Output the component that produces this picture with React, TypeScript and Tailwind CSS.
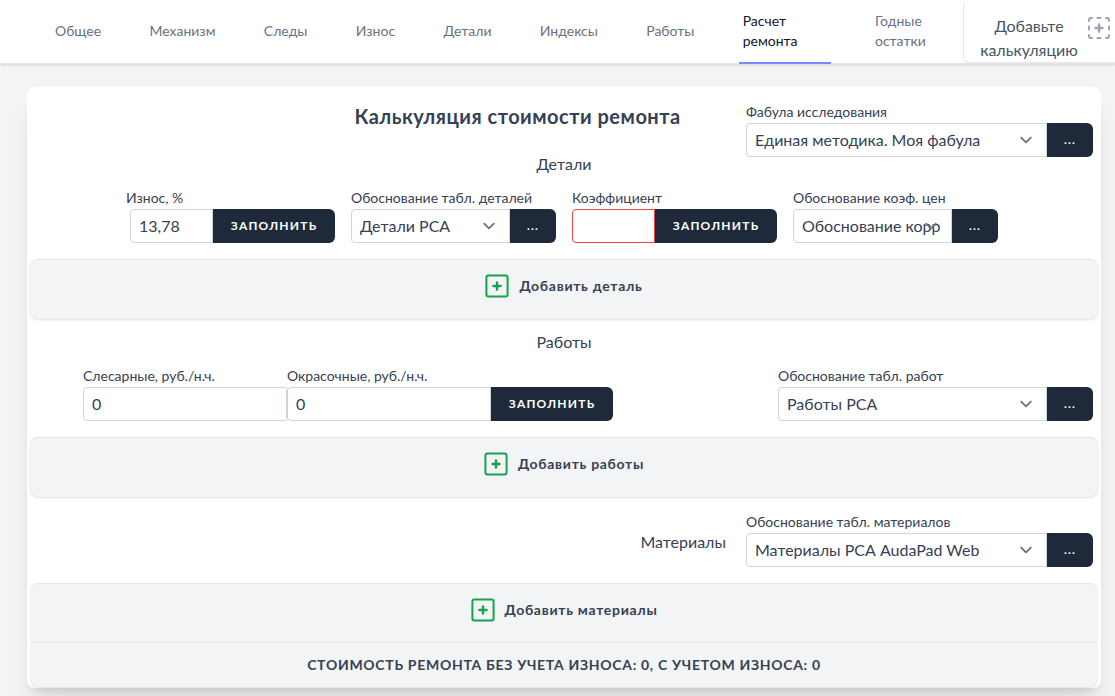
import React from "react"

const tabs = [
  "Общее",
  "Механизм",
  "Следы",
  "Износ",
  "Детали",
  "Индексы",
  "Работы",
  "Расчет ремонта",
  "Годные остатки",
]

const activeTab = "Расчет ремонта"

const DashedPlusIcon: React.FC = () => (
  <svg
    className="size-6 shrink-0 text-[#9ca3af]"
    viewBox="0 0 24 24"
    fill="none"
    stroke="currentColor"
    strokeWidth="2"
    strokeLinecap="round"
    aria-hidden="true"
  >
    <path d="M5 2H4a2 2 0 0 0-2 2v1M19 2h1a2 2 0 0 1 2 2v1M22 19v1a2 2 0 0 1-2 2h-1M5 22H4a2 2 0 0 1-2-2v-1" />
    <path d="M10.5 2h3M10.5 22h3M2 10.5v3M22 10.5v3" />
    <path d="M12 8.5v7M8.5 12h7" strokeWidth="2.4" />
  </svg>
)

const PlusSquareIcon: React.FC = () => (
  <svg
    className="size-6 shrink-0 text-[#16a34a]"
    viewBox="0 0 24 24"
    fill="none"
    stroke="currentColor"
    strokeWidth="2"
    strokeLinecap="round"
    aria-hidden="true"
  >
    <rect x="1.4" y="1.4" width="21.2" height="21.2" rx="2" />
    <path d="M12 8.4v7.2M8.4 12h7.2" strokeWidth="2.4" />
  </svg>
)

interface FieldProps {
  id: string
  label: string
  className?: string
  labelClassName?: string
  children: React.ReactNode
}

const Field: React.FC<FieldProps> = ({ id, label, className = "", labelClassName = "", children }) => (
  <div className={className}>
    <label
      htmlFor={id}
      className={`block whitespace-nowrap text-sm leading-[22px] text-gray-700 ${labelClassName}`}
    >
      {label}
    </label>
    <div className="flex h-[34px]">{children}</div>
  </div>
)

const Select: React.FC<{ id: string; value: string }> = ({ id, value }) => (
  <div className="relative min-w-0 flex-1">
    <select
      id={id}
      className="h-full w-full appearance-none rounded-l border border-gray-300 bg-white px-2 text-base text-gray-700"
    >
      <option>{value}</option>
    </select>
    <svg
      className="pointer-events-none absolute right-[9px] top-[5px] size-6 text-gray-500"
      viewBox="0 0 20 20"
      fill="none"
      stroke="currentColor"
      strokeWidth="1.5"
      strokeLinecap="round"
      strokeLinejoin="round"
      aria-hidden="true"
    >
      <path d="M6 8l4 4 4-4" />
    </svg>
  </div>
)

const TextInput: React.FC<{ id: string; value: string; invalid?: boolean }> = ({
  id,
  value,
  invalid,
}) => (
  <input
    id={id}
    type="text"
    defaultValue={value}
    className={`min-w-0 flex-1 rounded-l border bg-white px-2 text-base text-gray-700 ${
      invalid ? "border-[#ef4444]" : "border-gray-300"
    }`}
  />
)

const MoreButton: React.FC = () => (
  <button
    type="button"
    className="w-[46px] shrink-0 rounded-r-md bg-gray-800 text-xs font-bold tracking-widest text-white"
  >
    ...
  </button>
)

const FillButton: React.FC = () => (
  <button
    type="button"
    className="w-[122px] shrink-0 rounded-r-md bg-gray-800 text-xs font-bold uppercase tracking-widest text-white"
  >
    Заполнить
  </button>
)

const AddButton: React.FC<{ children: string }> = ({ children }) => (
  <button
    type="button"
    className="flex h-[52px] w-full items-center justify-center gap-2.5 text-sm font-bold tracking-wider text-gray-700"
  >
    <PlusSquareIcon />
    {children}
  </button>
)

const App: React.FC = () => {
  return (
    <div className="min-h-screen bg-gray-100 pb-2 font-['Lato','Noto_Sans',sans-serif] text-gray-700">
      <header className="flex h-16 border-b border-gray-200 bg-white shadow-sm">
        <nav className="flex flex-1 justify-between pl-[51px] text-sm">
          {tabs.map((tab) => (
            <a
              key={tab}
              href="#"
              className={`-mb-px flex max-w-[92px] items-center border-b-2 px-1 ${
                tab === activeTab
                  ? "w-[92px] border-indigo-400 text-gray-900"
                  : "border-transparent text-gray-500"
              }`}
            >
              {tab}
            </a>
          ))}
        </nav>
        <button
          type="button"
          className="flex h-[63px] w-[152px] items-start justify-between rounded-l-md border border-t-0 border-r-0 border-gray-200 pl-4 pr-1 pt-4 text-base leading-6 text-gray-600"
        >
          <span className="-mt-0.5 w-[98px]">Добавьте калькуляцию</span>
          <DashedPlusIcon />
        </button>
      </header>

      <main className="mt-[23px] mr-[14px] ml-[27px] rounded-lg bg-white px-[3px] shadow-xl">
        <section>
          <div className="flex justify-end gap-4 pr-[5px] pt-[14px]">
            <h1 className="flex-1 pl-[275px] text-center text-xl leading-[30px] font-bold tracking-wide whitespace-nowrap">
              Калькуляция стоимости ремонта
            </h1>
            <Field id="plot" label="Фабула исследования" className="w-[347px]">
              <Select id="plot" value="Единая методика. Моя фабула" />
              <MoreButton />
            </Field>
          </div>
          <h2 className="-mt-1 mb-3 text-center text-base leading-[22px]">Детали</h2>
          <div className="mb-4 flex justify-center gap-4">
            <Field id="wear" label="Износ, %" className="w-[205px]" labelClassName="-ml-1">
              <TextInput id="wear" value="13,78" />
              <FillButton />
            </Field>
            <Field id="parts" label="Обоснование табл. деталей" className="w-[205px]">
              <Select id="parts" value="Детали РСА" />
              <MoreButton />
            </Field>
            <Field id="ratio" label="Коэффициент" className="w-[205px]">
              <TextInput id="ratio" value="" invalid />
              <FillButton />
            </Field>
            <Field id="prices" label="Обоснование коэф. цен" className="w-[205px]">
              <Select id="prices" value="Обоснование корр" />
              <MoreButton />
            </Field>
          </div>
          <div className="h-[60px] rounded-lg border-t border-gray-200 bg-gray-100 shadow">
            <AddButton>Добавить деталь</AddButton>
          </div>
        </section>

        <section>
          <h2 className="py-3 text-center text-base leading-[22px]">Работы</h2>
          <div className="mb-4 flex justify-between pl-[53px] pr-[5px]">
            <div className="flex">
              <Field id="metalwork" label="Слесарные, руб./н.ч." className="w-[204px]">
                <TextInput id="metalwork" value="0" />
              </Field>
              <Field id="painting" label="Окрасочные, руб./н.ч." className="w-[326px]">
                <TextInput id="painting" value="0" />
                <FillButton />
              </Field>
            </div>
            <Field id="works" label="Обоснование табл. работ" className="w-[315px]">
              <Select id="works" value="Работы РСА" />
              <MoreButton />
            </Field>
          </div>
          <div className="h-[60px] rounded-lg border-t border-gray-200 bg-gray-100 shadow">
            <AddButton>Добавить работы</AddButton>
          </div>
        </section>

        <section>
          <div className="mb-4 flex items-center justify-end gap-5 pr-[5px] pt-[14px]">
            <h2 className="pt-1.5 text-base">Материалы</h2>
            <Field id="materials" label="Обоснование табл. материалов" className="w-[347px]">
              <Select id="materials" value="Материалы РСА AudaPad Web" />
              <MoreButton />
            </Field>
          </div>
          <div className="rounded-lg border-y border-gray-200 bg-gray-100">
            <div className="h-[59px] border-b border-gray-200">
              <AddButton>Добавить материалы</AddButton>
            </div>
            <p className="py-3 text-center text-sm font-bold uppercase tracking-wider">
              Стоимость ремонта без учета износа: 0, с учетом износа: 0
            </p>
          </div>
        </section>
      </main>
    </div>
  )
}

export default App
